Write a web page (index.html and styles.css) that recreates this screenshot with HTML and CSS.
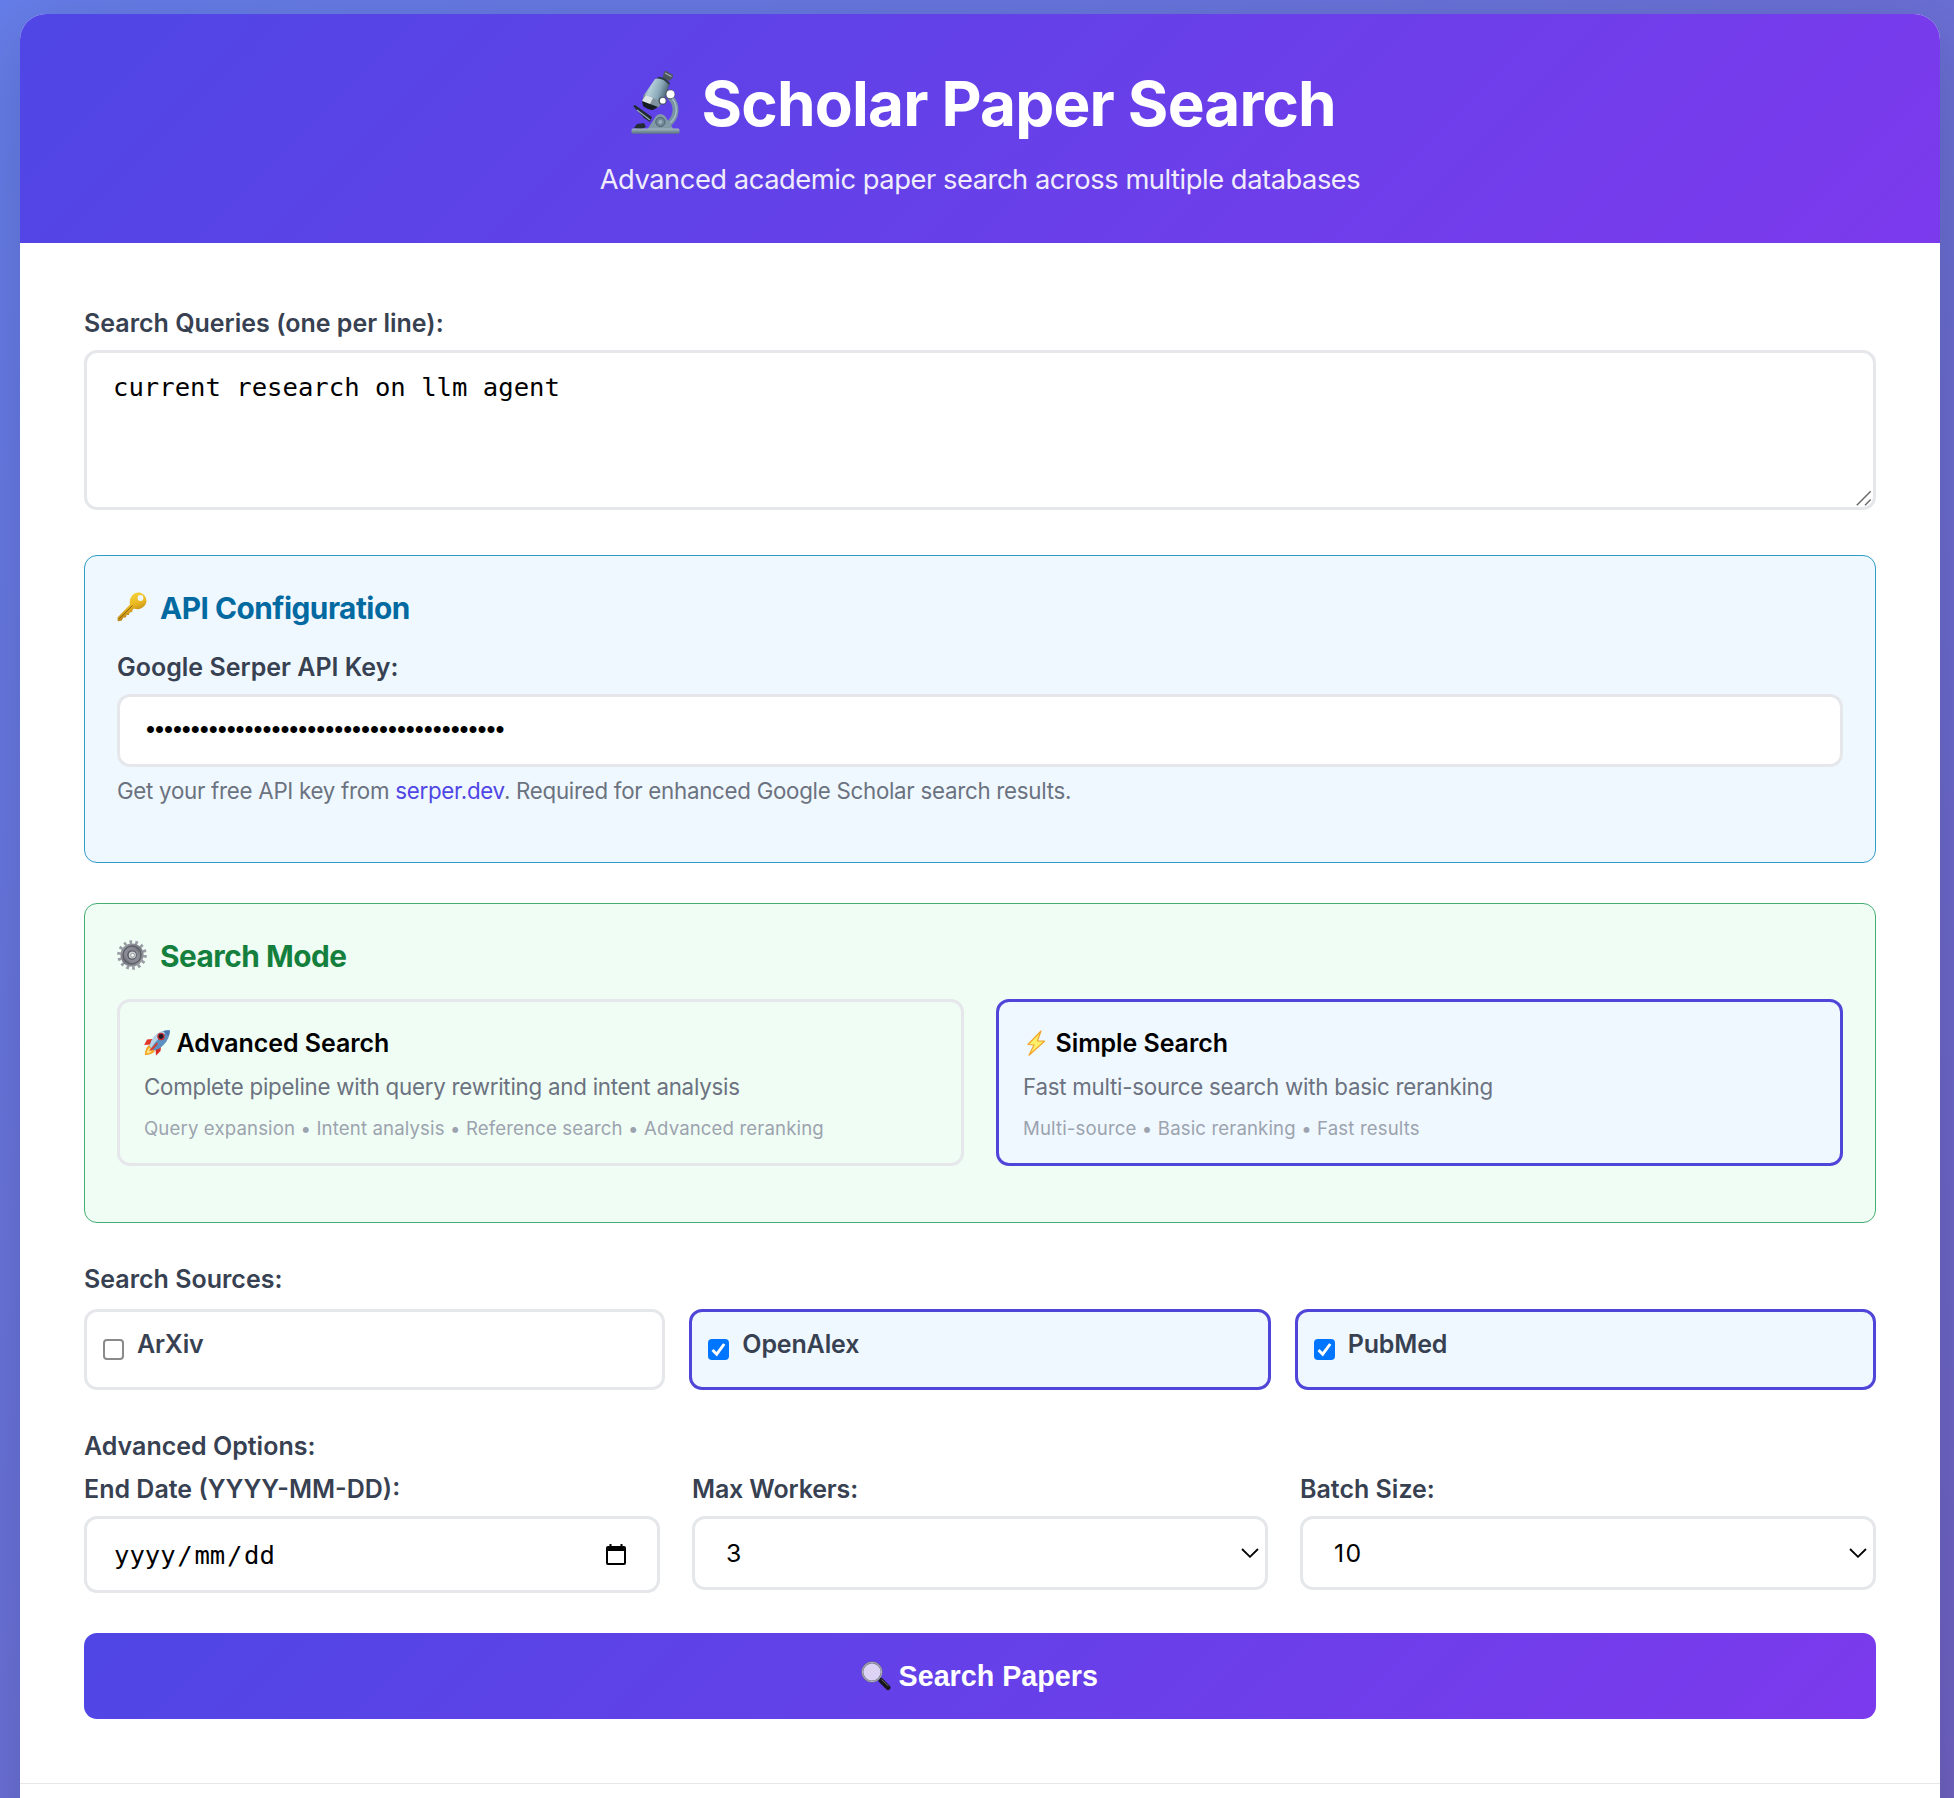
FILE: index.html
```html
<!DOCTYPE html>
<html lang="en">
<head>
<meta charset="utf-8">
<title>Scholar Paper Search</title>
<link rel="stylesheet" href="styles.css">
</head>
<body>
<div class="container">
  <header class="header">
    <h1 class="title">
      <svg class="icon-hero" viewBox="0 0 64 64">
        <defs>
          <linearGradient id="tube" x1="0" y1="0" x2="1" y2=".35"><stop offset="0" stop-color="#5d8296"/><stop offset=".35" stop-color="#b4ced9"/><stop offset=".7" stop-color="#8aa9b8"/><stop offset="1" stop-color="#4d6877"/></linearGradient>
          <linearGradient id="base" x1="0" y1="0" x2="0" y2="1"><stop offset="0" stop-color="#a3b7c2"/><stop offset="1" stop-color="#5b7482"/></linearGradient>
        </defs>
        <path d="M46 27C54 35 54 48 42 56" fill="none" stroke="#7793a3" stroke-width="6"/>
        <path d="M48 28C54 36 54 46 46 53" fill="none" stroke="#a5bac6" stroke-width="1.5"/>
        <path d="M9 36L11 35L28 47L26 52L20 48Z" fill="#202a32"/>
        <path d="M13 40L26 50" stroke="#8fa5b1" stroke-width="1.5"/>
        <path d="M23 60L32 46Q36 42 41 46L50 60Z" fill="#8299a7"/>
        <circle cx="36.4" cy="52" r="4.6" fill="#718895" stroke="#4e626e"/>
        <circle cx="36.4" cy="52" r="2" fill="#9bb0bc"/>
        <path d="M10 58L13 54L20 53L22 57L17 59Z" fill="#222c33"/>
        <rect x="7.5" y="58.5" width="48" height="5.2" rx="1.5" fill="url(#base)"/>
        <path d="M40 2L42 .8L49 5L48.500 8L45 11L38.500 8Z" fill="#4b565e"/>
        <path d="M41 3L47.500 6.500" stroke="#a2adb3" stroke-width="1.2"/>
        <path d="M34 7Q40 6 46 13L42 23L28 17Z" fill="#293842"/>
        <path d="M31 9Q38 7 45 15L38 33L20 25Z" fill="url(#tube)"/>
        <path d="M20 24L38 32L35 37Q29 40 18 32Z" fill="#80939f"/>
        <path d="M22 25L29 28L25 36L18 31Z" fill="#dce4e7"/>
        <path d="M18 31L34 37L29 40Q24 40 19 36Z" fill="#161d22"/>
        <circle cx="46" cy="24.500" r="5" fill="#52646f"/><circle cx="46.500" cy="24.300" r="4" fill="#fff"/>
        <circle cx="38.600" cy="30.700" r="4" fill="#44545e"/><circle cx="38.800" cy="30.700" r="2.900" fill="#fff"/>
      </svg>
      <span>Scholar Paper Search</span>
    </h1>
    <p class="subtitle">Advanced academic paper search across multiple databases</p>
  </header>

  <main class="content">
    <div class="label">Search Queries (one per line):</div>
    <div class="field query">current research on llm agent
      <svg class="resizer" viewBox="0 0 16 16"><path d="M.8 15.200L14.700 1.300M9 15.200L14.700 9.500" fill="none" stroke="#6b6b6b" stroke-width="1.500"/></svg>
    </div>

    <section class="panel panel-api">
      <h2 class="panel-title">
        <svg class="icon-section" viewBox="0 0 30 30">
          <defs><linearGradient id="gold" x1="0" y1="0" x2=".4" y2="1"><stop offset="0" stop-color="#fae04a"/><stop offset=".55" stop-color="#eab822"/><stop offset="1" stop-color="#a77412"/></linearGradient></defs>
          <path d="M15 3.500Q18-.4 23 .6Q29.500 3 29.500 9.500Q28.500 15 22.500 17Q19 17.500 17 16.500L15.500 18L15.200 20L12.500 20.500L12 23L9.500 23L9 25.500L6.500 25.500L4.500 28.800L.7 29.200L.5 25.500L13 12.500Q12 7.500 15 3.500Z" fill="url(#gold)"/>
          <path d="M2 27L15.500 13.500" stroke="#8e650f" stroke-width="1"/>
          <circle cx="23.500" cy="6" r="2.900" fill="#f0f8ff"/>
        </svg>
        <span>API Configuration</span>
      </h2>
      <div class="label key-label">Google Serper API Key:</div>
      <div class="field key-input">••••••••••••••••••••••••••••••••••••••••</div>
      <p class="help">Get your free API key from <a class="link">serper.dev</a>. Required for enhanced Google Scholar search results.</p>
    </section>

    <section class="panel panel-mode">
      <h2 class="panel-title">
        <svg class="icon-section" viewBox="0 0 30 30">
          <defs><linearGradient id="steel" x1="0" y1="0" x2="1" y2="1"><stop offset="0" stop-color="#a4a5ad"/><stop offset=".5" stop-color="#777982"/><stop offset="1" stop-color="#a8a9b0"/></linearGradient></defs>
          <circle cx="15" cy="15" r="13" fill="none" stroke="#9a9ca5" stroke-width="3.600" stroke-dasharray="2.600 3.234"/>
          <circle cx="15" cy="15" r="11.600" fill="url(#steel)"/>
          <circle cx="15" cy="15" r="9" fill="none" stroke="#5d5f67" stroke-width="1.400"/>
          <circle cx="15" cy="15" r="6.500" fill="#8b8d96"/>
          <circle cx="15" cy="15" r="4.800" fill="#595b64"/>
          <circle cx="15.300" cy="15" r="3.600" fill="#d3d4d9"/>
          <circle cx="15.600" cy="15.200" r="1.900" fill="#f3fff7" stroke="#777982" stroke-width=".7"/>
        </svg>
        <span>Search Mode</span>
      </h2>
      <div class="modes">
        <div class="mode">
          <h3 class="mode-title">
            <svg class="icon-mode" viewBox="0 0 26 26">
              <path d="M8 9L3 9.500L.2 15L7 14.500Z" fill="#e3372b"/>
              <path d="M17 17L16.500 21L12 25.500L11.500 19Z" fill="#d92b22"/>
              <path d="M5 15Q1 18 .8 25.200Q8 25 11 21Z" fill="#f5a32a"/>
              <path d="M5.500 17.500Q3 19.500 2.500 23.500Q6.500 23 8.500 20.500Z" fill="#ffe67a"/>
              <path d="M25.800.3Q16 0 10 7Q6.500 11 5.500 16L10 20.500Q16 19 19.500 15Q25.800 9 25.800.3Z" fill="#5d8fc0"/>
              <path d="M25.800.3Q16 0 10 7Q6.500 11 5.500 16L7.500 18Q11 10 25.800.3Z" fill="#b7d5e8"/>
              <path d="M25.800.3Q22 0 19 1.200L24.500 6.500Q25.700 4 25.800.3Z" fill="#4a78b0"/>
              <circle cx="17" cy="6.500" r="3.700" fill="#c83232"/><circle cx="17" cy="6.500" r="2.400" fill="#201b2a"/>
              <path d="M5 20.500L13 12.500L14 14L8 20.500Z" fill="#d63a30"/>
            </svg>
            <span>Advanced Search</span>
          </h3>
          <p class="mode-desc">Complete pipeline with query rewriting and intent analysis</p>
          <p class="mode-tags">Query expansion • Intent analysis • Reference search • Advanced reranking</p>
        </div>
        <div class="mode selected">
          <h3 class="mode-title">
            <svg class="icon-mode" viewBox="0 0 26 26"><path d="M18 1L5 14.500L11 15L6 25.200L21.500 11.200L14.500 10.800Z" fill="#fff06a" stroke="#f0a52c" stroke-width="1.200" stroke-linejoin="round"/></svg>
            <span>Simple Search</span>
          </h3>
          <p class="mode-desc">Fast multi-source search with basic reranking</p>
          <p class="mode-tags">Multi-source • Basic reranking • Fast results</p>
        </div>
      </div>
    </section>

    <div class="label group-label">Search Sources:</div>
    <div class="sources">
      <div class="source"><span class="checkbox"></span><span>ArXiv</span></div>
      <div class="source selected">
        <span class="checkbox checked"><svg viewBox="0 0 21 21"><path d="M4.500 11L8.700 15.200L16.200 5" fill="none" stroke="#fff" stroke-width="2.900"/></svg></span>
        <span>OpenAlex</span>
      </div>
      <div class="source selected">
        <span class="checkbox checked"><svg viewBox="0 0 21 21"><path d="M4.500 11L8.700 15.200L16.200 5" fill="none" stroke="#fff" stroke-width="2.900"/></svg></span>
        <span>PubMed</span>
      </div>
    </div>

    <div class="label group-label">Advanced Options:</div>
    <div class="options">
      <div>
        <div class="label">End Date (YYYY-MM-DD):</div>
        <div class="field date">
          <span>yyyy<i class="slash">/</i>mm<i class="slash">/</i>dd</span>
          <svg class="calendar" viewBox="0 0 20 21"><path d="M3.500 0h2v2h9v-2h2v2h1.500q2 0 2 2v15q0 2-2 2h-16q-2 0-2-2v-15q0-2 2-2h1.500zM2 7v12h16v-12z" fill="#000" fill-rule="evenodd"/></svg>
        </div>
      </div>
      <div>
        <div class="label workers-label">Max Workers:</div>
        <div class="field select"><span>3</span><svg class="chevron" viewBox="0 0 18 10"><path d="M1 1L9 8.800L17 1" fill="none" stroke="#000" stroke-width="1.800"/></svg></div>
      </div>
      <div>
        <div class="label">Batch Size:</div>
        <div class="field select"><span>10</span><svg class="chevron" viewBox="0 0 18 10"><path d="M1 1L9 8.800L17 1" fill="none" stroke="#000" stroke-width="1.800"/></svg></div>
      </div>
    </div>

    <div class="submit">
      <svg class="icon-submit" viewBox="0 0 30 30">
        <path d="M17.500 17L21 20.500" stroke="#a9a9b0" stroke-width="2.500"/>
        <path d="M20 19.500L27 26.500" stroke="#17171c" stroke-width="5" stroke-linecap="round"/>
        <path d="M20.500 18.500L27.500 25" stroke="#66666d" stroke-width="1"/>
        <circle cx="11" cy="11" r="9.600" fill="#dcd3f5" stroke="#717184" stroke-width="2"/>
        <circle cx="11" cy="11" r="9.600" fill="none" stroke="#c3c3cd" stroke-width=".8"/>
      </svg>
      <span>Search Papers</span>
    </div>
  </main>
  <div class="results"></div>
</div>
</body>
</html>
```
FILE: styles.css
```css
* { box-sizing: border-box; margin: 0; padding: 0; }
html { height: 100%; overflow: hidden; }
body {
  height: 1798px;
  overflow: hidden;
  padding: 14px 14px 0 20px;
  font-family: Inter, sans-serif;
  background: linear-gradient(135deg, #667eea 0%, #764ba2 100%) 0 0 / 1954px 4900px no-repeat;
}
svg { display: block; flex: none; }

.container {
  height: 1900px;
  background: #fff;
  border-radius: 26px;
  overflow: hidden;
  box-shadow: 0 16px 80px rgba(0, 0, 0, .17);
}
.header {
  height: 229px;
  padding-top: 52px;
  color: #fff;
  background: linear-gradient(135deg, #4f46e5 0%, #7c3aed 100%);
}
.title {
  display: flex;
  justify-content: center;
  align-items: center;
  gap: 13.5px;
  height: 75px;
  font-size: 62px;
  font-weight: 700;
  line-height: 75px;
  letter-spacing: -.82px;
}
.icon-hero { width: 64px; height: 64px; margin-top: -3px; }
.subtitle {
  margin-top: 17px;
  font-size: 27.3px;
  line-height: 44px;
  letter-spacing: -.45px;
  text-align: center;
  opacity: .9;
}

.content { padding: 65px 64px 64px; }
.label {
  height: 30px;
  font-size: 25px;
  font-weight: 600;
  line-height: 30px;
  color: #374151;
}
.field {
  border: 3px solid #e5e7eb;
  border-radius: 13px;
  background: #fff;
  color: #000;
  margin-top: 12px;
}
.query {
  position: relative;
  height: 160px;
  padding: 19px 26px;
  font: 25.6px/30px "DejaVu Sans Mono", monospace;
}
.resizer { position: absolute; right: 1px; bottom: 1px; width: 16px; height: 16px; }

.panel { border: 1px solid; border-radius: 13px; padding: 32px; }
.panel-api { height: 308px; margin-top: 45px; border-color: #2f9bc8; background: #f0f8ff; }
.panel-mode { height: 320px; margin-top: 40px; border-color: #43ad74; background: #f0fdf4; }
.panel-title {
  display: flex;
  align-items: center;
  gap: 13px;
  height: 40px;
  font-size: 29.8px;
  font-weight: 700;
  line-height: 40px;
  letter-spacing: -.5px;
}
.panel-api .panel-title { color: #0369a1; }
.panel-mode .panel-title { color: #15803d; }
.icon-section { width: 30px; height: 30px; margin-top: -2px; }
.key-label { margin-top: 24px; }
.key-input {
  height: 73px;
  padding-left: 26px;
  font: 25.6px/65px "Liberation Sans", sans-serif;
}
.help {
  margin-top: 7px;
  font-size: 22.3px;
  line-height: 34px;
  letter-spacing: -.27px;
  color: #6b7280;
}
.link { color: #4f46e5; }

.modes { display: grid; grid-template-columns: 1fr 1fr; gap: 32px; margin-top: 23px; }
.mode { height: 167px; padding: 25px 24px 0; border: 3px solid #e5e7eb; border-radius: 13px; }
.mode.selected, .source.selected { border-color: #4f46d9; background: #f0f8ff; }
.mode-title {
  display: flex;
  align-items: center;
  gap: 6.5px;
  height: 32px;
  font-size: 25px;
  font-weight: 600;
  line-height: 32px;
  letter-spacing: -.08px;
  color: #000;
}
.icon-mode { width: 26px; height: 26px; margin-top: -1px; }
.mode-desc { margin-top: 13px; font-size: 22.3px; line-height: 30px; letter-spacing: -.235px; color: #6b7280; }
.mode-tags { margin-top: 13px; font-size: 18.6px; line-height: 26px; letter-spacing: .14px; color: #9ca3af; }

.group-label { margin-top: 41px; }
.sources { display: grid; grid-template-columns: repeat(3, 1fr); gap: 24px; margin-top: 15px; }
.source {
  display: flex;
  align-items: flex-start;
  gap: 13px;
  height: 81px;
  padding: 17px 16px 0;
  border: 3px solid #e5e7eb;
  border-radius: 13px;
  font-size: 25px;
  font-weight: 600;
  line-height: 30px;
  letter-spacing: -.15px;
  color: #374151;
}
.checkbox {
  flex: none;
  width: 21px;
  height: 21px;
  margin-top: 10px;
  border: 2px solid #8a8a8a;
  border-radius: 4px;
  background: #fff;
}
.checkbox.checked { border: 0; background: #0075ff; }

.options { display: grid; grid-template-columns: repeat(3, 1fr); gap: 32px; align-items: start; margin-top: 13px; }
.workers-label { letter-spacing: -.15px; }
.date, .select { display: flex; align-items: center; justify-content: space-between; }
.date {
  height: 77px;
  padding: 0 31px 0 27px;
  font: 25.6px/30px "DejaVu Sans Mono", monospace;
}
.slash { margin: 0 1.7px; font-style: normal; }
.calendar { width: 20px; height: 21px; margin-top: -1px; }
.select { height: 74px; padding: 0 6px 0 31px; font-size: 24.8px; line-height: 30px; letter-spacing: 1.5px; }
.chevron { width: 18px; height: 10px; }

.submit {
  display: flex;
  align-items: center;
  justify-content: center;
  gap: 7.5px;
  height: 86px;
  margin-top: 40px;
  padding-right: 1px;
  border-radius: 13px;
  background: linear-gradient(135deg, #4f46e5 0%, #7c3aed 100%);
  color: #fff;
  font: 700 28.7px/34px "Liberation Sans", sans-serif;
}
.icon-submit { width: 30px; height: 30px; margin-top: -1px; }
.results { border-top: 1px solid #e5e7eb; }
```
